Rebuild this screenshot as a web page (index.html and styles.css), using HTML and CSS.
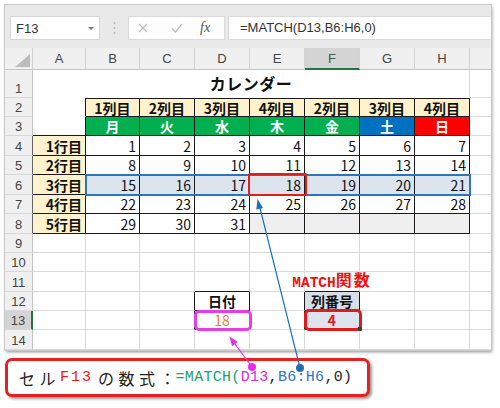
FILE: index.html
```html
<!DOCTYPE html>
<html lang="ja">
<head>
<meta charset="utf-8">
<title>MATCH関数</title>
<link rel="stylesheet" href="styles.css">
</head>
<body>
<div class="page">
  <div class="sheet">
    <div class="fbar">
      <div class="namebox"><span>F13</span><span class="caret"></span></div>
      <svg class="vsep" width="3" height="14" viewBox="0 0 3 14"><circle cx="1.5" cy="2" r="1" fill="#b5b5b5"/><circle cx="1.5" cy="7" r="1" fill="#b5b5b5"/><circle cx="1.5" cy="12" r="1" fill="#b5b5b5"/></svg>
      <div class="btns">
        <svg class="ico-x" width="10" height="10" viewBox="0 0 10 10"><path d="M1 1L9 9M9 1L1 9" stroke="#bdbdbd" stroke-width="1.3" fill="none"/></svg>
        <svg class="ico-ok" width="12" height="10" viewBox="0 0 12 10"><path d="M1 5.5L4.5 9L11 1" stroke="#bdbdbd" stroke-width="1.3" fill="none"/></svg>
        <span class="fx">fx</span>
      </div>
      <div class="finput">=MATCH(D13,B6:H6,0)</div>
    </div>

    <div class="grid">
      <!-- column headers -->
      <div class="ch corner"><span class="tri"></span></div>
      <div class="ch">A</div><div class="ch">B</div><div class="ch">C</div><div class="ch">D</div>
      <div class="ch">E</div><div class="ch sel">F</div><div class="ch">G</div><div class="ch">H</div>
      <div class="ch last"></div>

      <!-- row 1 -->
      <div class="rh">1</div>
      <div class="c title">カレンダー</div>
      <div class="c x"></div>

      <!-- row 2 -->
      <div class="rh">2</div>
      <div class="c w kr"></div>
      <div class="c hd">1列目</div><div class="c hd">2列目</div><div class="c hd">3列目</div><div class="c hd">4列目</div>
      <div class="c hd">2列目</div><div class="c hd">3列目</div><div class="c hd">4列目</div>
      <div class="c x"></div>

      <!-- row 3 -->
      <div class="rh">3</div>
      <div class="c w kr kb"></div>
      <div class="c day gr">月</div><div class="c day gr">火</div><div class="c day gr">水</div><div class="c day gr">木</div>
      <div class="c day gr">金</div><div class="c day bl">土</div><div class="c day rd">日</div>
      <div class="c x"></div>

      <!-- row 4 -->
      <div class="rh rk">4</div>
      <div class="c lab k">1行目</div>
      <div class="c n k">1</div><div class="c n k">2</div><div class="c n k">3</div><div class="c n k">4</div>
      <div class="c n k">5</div><div class="c n k">6</div><div class="c n k">7</div>
      <div class="c x"></div>

      <!-- row 5 -->
      <div class="rh rk">5</div>
      <div class="c lab k">2行目</div>
      <div class="c n k">8</div><div class="c n k">9</div><div class="c n k">10</div><div class="c n k">11</div>
      <div class="c n k">12</div><div class="c n k">13</div><div class="c n k">14</div>
      <div class="c x"></div>

      <!-- row 6 -->
      <div class="rh rk">6</div>
      <div class="c lab k">3行目</div>
      <div class="c n k hl">15</div><div class="c n k hl">16</div><div class="c n k hl">17</div><div class="c n k hl">18</div>
      <div class="c n k hl">19</div><div class="c n k hl">20</div><div class="c n k hl">21</div>
      <div class="c x"></div>

      <!-- row 7 -->
      <div class="rh rk">7</div>
      <div class="c lab k">4行目</div>
      <div class="c n k">22</div><div class="c n k">23</div><div class="c n k">24</div><div class="c n k">25</div>
      <div class="c n k">26</div><div class="c n k">27</div><div class="c n k">28</div>
      <div class="c x"></div>

      <!-- row 8 -->
      <div class="rh rk">8</div>
      <div class="c lab k">5行目</div>
      <div class="c n k">29</div><div class="c n k">30</div><div class="c n k">31</div><div class="c n k gy"></div>
      <div class="c n k gy"></div><div class="c n k gy"></div><div class="c n k gy"></div>
      <div class="c x"></div>

      <!-- row 9 -->
      <div class="rh">9</div>
      <div class="c"></div><div class="c"></div><div class="c"></div><div class="c"></div>
      <div class="c"></div><div class="c"></div><div class="c"></div><div class="c"></div>
      <div class="c x"></div>

      <!-- row 10 -->
      <div class="rh">10</div>
      <div class="c"></div><div class="c"></div><div class="c"></div><div class="c"></div>
      <div class="c"></div><div class="c"></div><div class="c"></div><div class="c"></div>
      <div class="c x"></div>

      <!-- row 11 -->
      <div class="rh">11</div>
      <div class="c"></div><div class="c"></div><div class="c"></div><div class="c kb"></div>
      <div class="c"></div>
      <div class="c kb mt"><span class="mt-a">MATCH</span><span class="mt-b">関数</span></div>
      <div class="c"></div><div class="c"></div>
      <div class="c x"></div>

      <!-- row 12 -->
      <div class="rh">12</div>
      <div class="c"></div><div class="c"></div><div class="c kr"></div>
      <div class="c k ctr bold">日付</div>
      <div class="c kr"></div>
      <div class="c k ctr bold bg12">列番号</div>
      <div class="c"></div><div class="c"></div>
      <div class="c x"></div>

      <!-- row 13 -->
      <div class="rh sel">13</div>
      <div class="c"></div><div class="c"></div><div class="c kr"></div>
      <div class="c k ctr orange">18</div>
      <div class="c kr"></div>
      <div class="c k ctr bg13 red4">4</div>
      <div class="c"></div><div class="c"></div>
      <div class="c x"></div>

      <!-- row 14 -->
      <div class="rh">14</div>
      <div class="c"></div><div class="c"></div><div class="c"></div><div class="c"></div>
      <div class="c"></div><div class="c"></div><div class="c"></div><div class="c"></div>
      <div class="c x"></div>

      <!-- overlays -->
      <div class="ov ov-row"></div>
      <div class="ov ov-e6"></div>
      <div class="ov ov-d13"></div>
      <div class="ov ov-f13"></div>
      <div class="ov handle"></div>
    </div>
  </div>

  <div class="callout">
    <span class="jp">セル</span><span class="cf">F13</span><span class="jp">の数式</span><span class="colon">：</span><span class="code"><span class="cg">=MATCH(</span><span class="cm">D13</span>,<span class="cb">B6:H6</span>,0)</span>
  </div>

  <svg class="arrows" width="500" height="408" viewBox="0 0 500 408">
    <line x1="300" y1="368" x2="259" y2="204" stroke="#1f6fb5" stroke-width="1.2"/>
    <polygon points="257.5,199 256.3,209.6 263.1,207.9" fill="#1f6fb5"/>
    <circle cx="300" cy="368" r="4" fill="#1f6fb5"/>
    <line x1="252" y1="367" x2="232" y2="340" stroke="#e62ee6" stroke-width="1.2"/>
    <polygon points="229.5,336.5 232.1,346.3 237.7,342.1" fill="#e62ee6"/>
    <circle cx="252" cy="367" r="4" fill="#e62ee6"/>
  </svg>
</div>
</body>
</html>
```

FILE: styles.css
```css
html, body {
  margin: 0;
  padding: 0;
}
body {
  width: 500px;
  height: 408px;
  overflow: hidden;
  background: #ffffff;
  font-family: "Noto Sans CJK JP", "Liberation Sans", sans-serif;
  color: #111;
}
.page {
  position: relative;
  padding: 5px 0 0 5px;
}
.sheet {
  width: 486px;
  background: #fff;
  box-shadow: 0 0 0 1px #c8c8c8, 1px 2px 3px rgba(0, 0, 0, 0.45);
}

/* formula bar */
.fbar {
  height: 43px;
  box-sizing: border-box;
  background: #e9e9e9;
  display: flex;
  align-items: flex-start;
  padding: 11px 0 0 5px;
}
.namebox {
  width: 90px;
  height: 24px;
  box-sizing: border-box;
  background: #fff;
  border: 1px solid #d6d6d6;
  display: flex;
  align-items: center;
  justify-content: space-between;
  padding: 0 5px 0 5px;
  font: 13px "Liberation Sans", sans-serif;
  color: #333;
}
.caret {
  width: 0;
  height: 0;
  border-left: 3px solid transparent;
  border-right: 3px solid transparent;
  border-top: 3px solid #777;
}
.vsep {
  margin: 5px 12px 0 13px;
}
.btns {
  width: 97px;
  height: 24px;
  box-sizing: border-box;
  background: #fdfdfd;
  border: 1px solid #dadada;
  display: flex;
  align-items: center;
  padding-left: 9px;
}
.ico-ok {
  margin-left: 23px;
}
.fx {
  margin-left: 17px;
  font: italic 14px "Liberation Serif", serif;
  color: #555;
}
.finput {
  flex: 1;
  margin-left: 3px;
  height: 24px;
  box-sizing: border-box;
  background: #fff;
  border: 1px solid #dadada;
  border-right: none;
  padding-left: 11px;
  font: 13px/22px "Liberation Sans", sans-serif;
  color: #333;
}

/* grid */
.grid {
  position: relative;
  display: grid;
  grid-template-columns: 28px 53px 54px repeat(6, 55px) 21px;
  grid-template-rows: 22px 28px 19px 19px 20px 19px 20px 19px 20px 19px 19px 20px 19px 19px 20px;
}
.ch {
  box-sizing: border-box;
  background: #f0f0f0;
  border-right: 1px solid #d2d2d2;
  border-bottom: 1px solid #c4c4c4;
  display: flex;
  align-items: center;
  justify-content: center;
  font: 13px "Liberation Sans", sans-serif;
  color: #444;
}
.ch.sel {
  background: #d4d4d4;
  border-bottom: 2px solid #217346;
  color: #3b5d47;
}
.ch.last {
  border-right: none;
}
.corner {
  align-items: flex-end;
  justify-content: flex-end;
  padding: 0 2px 2px 0;
}
.tri {
  width: 15px;
  height: 13px;
  background: #bcbcbc;
  clip-path: polygon(100% 0, 100% 100%, 0 100%);
}
.rh {
  box-sizing: border-box;
  background: #f0f0f0;
  border-right: 1px solid #c4c4c4;
  border-bottom: 1px solid #d8d8d8;
  display: flex;
  align-items: flex-end;
  justify-content: center;
  padding-bottom: 1px;
  font: 13px "Liberation Sans", sans-serif;
  color: #444;
}
.rh.rk {
  border-right-color: #666;
}
.rh.sel {
  background: #d4d4d4;
  border-right: 2px solid #217346;
}
.c {
  box-sizing: border-box;
  min-width: 0;
  border-right: 1px solid #dadada;
  border-bottom: 1px solid #dadada;
  display: flex;
  align-items: center;
  padding: 0 3px;
  font-size: 14px;
  white-space: nowrap;
}
.c.x {
  border-right: none;
}
.title {
  grid-column: span 8;
  border-bottom: none;
  justify-content: center;
  align-items: flex-start;
  padding-top: 1px;
  font-size: 16px;
  font-weight: 700;
  letter-spacing: 0.5px;
}
.c.w {
  border-bottom-color: transparent;
}
.kr {
  border-right-color: #1a1a1a;
}
.c.kb, .c.w.kb {
  border-bottom-color: #1a1a1a;
}
.k {
  border-right-color: #1a1a1a;
  border-bottom-color: #1a1a1a;
}
.hd {
  background: #fff2cc;
  border-top: 1px solid #1a1a1a;
  border-right-color: #1a1a1a;
  border-bottom-color: #1a1a1a;
  justify-content: center;
  font-weight: 700;
}
.day {
  border-right-color: #1a1a1a;
  border-bottom-color: #1a1a1a;
  justify-content: center;
  font-weight: 700;
  color: #fff;
}
.gr { background: #00b050; }
.bl { background: #0070c0; }
.rd { background: #ff0000; }
.lab {
  background: #fff2cc;
  justify-content: flex-end;
  font-weight: 700;
}
.n {
  justify-content: flex-end;
}
.hl {
  background: #dce4ee;
}
.gy {
  background: #efefef;
}
.ctr {
  justify-content: center;
}
.bold {
  font-weight: 700;
}
.bg12 {
  background: #d9dfe7;
}
.bg13 {
  background: #dbe4ef;
}
.orange {
  color: #e97f35;
}
.red4 {
  color: #e01818;
  font-weight: 700;
}
.mt {
  justify-content: center;
  overflow: visible;
  color: #f01010;
  font-weight: 700;
  align-items: flex-end;
  padding-bottom: 0;
}
.mt-a {
  font: 700 14.5px "Liberation Mono", monospace;
}
.mt-b {
  font-size: 16px;
  letter-spacing: 2px;
}

/* overlays */
.ov {
  position: absolute;
  box-sizing: border-box;
  pointer-events: none;
}
.ov-row {
  left: 80px;
  top: 126px;
  width: 386px;
  height: 22px;
  border: 2px solid #2e75b6;
}
.ov-e6 {
  left: 243px;
  top: 125px;
  width: 59px;
  height: 23px;
  border: 2.5px solid #e31c1c;
  border-radius: 2px;
}
.ov-d13 {
  left: 189px;
  top: 262px;
  width: 58px;
  height: 21px;
  border: 3px solid #e23fe6;
  border-radius: 5px;
}
.ov-f13 {
  left: 299px;
  top: 261px;
  width: 58px;
  height: 22px;
  border: 3px solid #e01b1b;
  border-radius: 5px;
}
.handle {
  left: 353px;
  top: 279px;
  width: 4px;
  height: 4px;
  background: #2a4a35;
}

/* callout */
.callout {
  margin-top: 8px;
  width: 365px;
  height: 39px;
  box-sizing: border-box;
  border: 3px solid #e52222;
  border-radius: 7px;
  background: #fff;
  box-shadow: 2px 2px 3px rgba(0, 0, 0, 0.4);
  display: flex;
  align-items: center;
  padding-left: 11px;
  white-space: nowrap;
  color: #222;
}
.jp {
  font-size: 16px;
  letter-spacing: 4.5px;
}
.colon {
  font-size: 16px;
}
.cf {
  font: 15px "Liberation Mono", monospace;
  letter-spacing: 2px;
  margin-right: 5px;
  color: #e3201b;
}
.code {
  font: 15px "Liberation Mono", monospace;
  letter-spacing: 0.3px;
  color: #222;
}
.cg { color: #21a06a; }
.cm { color: #d92bd9; }
.cb { color: #2a78c2; }

.arrows {
  position: absolute;
  left: 0;
  top: 0;
  pointer-events: none;
}
```
